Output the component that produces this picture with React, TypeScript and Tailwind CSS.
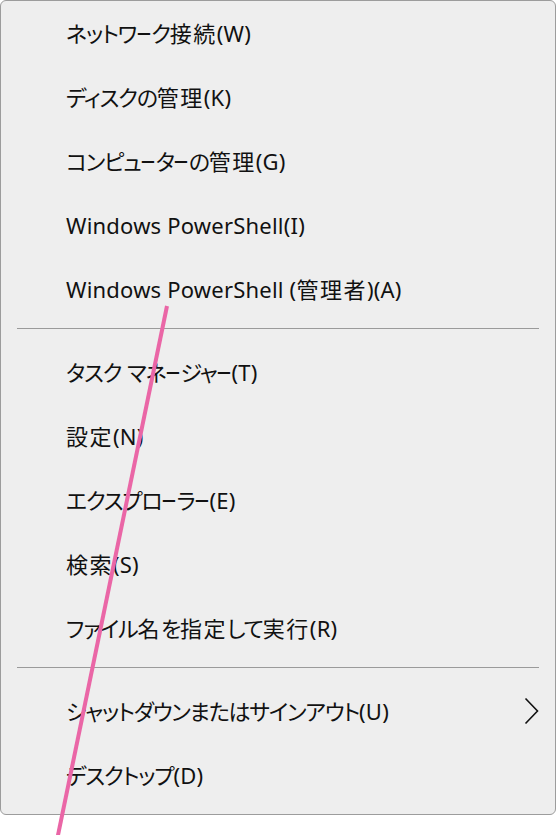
import React from 'react';

const groups: string[][] = [
  [
    'ネットワーク接続(W)',
    'ディスクの管理(K)',
    'コンピューターの管理(G)',
    'Windows PowerShell(I)',
    'Windows PowerShell (管理者)(A)',
  ],
  [
    'タスク マネージャー(T)',
    '設定(N)',
    'エクスプローラー(E)',
    '検索(S)',
    'ファイル名を指定して実行(R)',
  ],
  ['シャットダウンまたはサインアウト(U)', 'デスクトップ(D)'],
];

// the fallback CJK font is wider in kana and narrower in kanji than the
// original UI font, so each script run gets its own spacing
const runClass = (ch: string) => {
  if (ch === 'ー') return 'bar';
  if (/[\u3040-\u30ff]/.test(ch)) return 'tracking-[-1.2px]';
  if (/[\u4e00-\u9fff]/.test(ch)) return 'tracking-[1.5px]';
  return 'tracking-[0.2px]';
};

const Label = ({ text }: { text: string }) => {
  const runs: { cls: string; text: string }[] = [];
  for (const ch of text) {
    const cls = runClass(ch);
    const last = runs[runs.length - 1];
    if (last && last.cls === cls && cls !== 'bar') last.text += ch;
    else runs.push({ cls, text: ch });
  }
  return (
    <span>
      {runs.map((r, i) =>
        r.cls === 'bar' ? (
          <span key={i} className="inline-flex justify-center w-[15px]">
            <span className="inline-block scale-x-[0.7]">{r.text}</span>
          </span>
        ) : (
          <span key={i} className={r.cls}>{r.text}</span>
        )
      )}
    </span>
  );
};

const App = () => {
  return (
    <div className="relative w-[556px] h-[835px] bg-white overflow-hidden font-['Noto_Sans','Noto_Sans_CJK_JP',sans-serif]">
      <div className="w-[556px] h-[815px] bg-[#eeeeee] border border-[#9c9c9c] rounded-[6px]">
        {groups.map((items, gi) => (
          <div key={gi}>
            {gi > 0 && <div className="mx-4 mt-[7px] mb-[11px] h-px bg-[#9a9a9a]" />}
            {items.map((label) => (
              <div key={label} className="h-16 flex items-center justify-between pl-[65px] pr-4 text-[22px] text-[#111] [font-feature-settings:'palt']">
                <Label text={label} />
                {label.startsWith('シャット') && (
                  <svg width="15" height="28" viewBox="0 0 15 28" className="shrink-0">
                    <polyline points="1.5,1.5 13.5,14 1.5,26.5" fill="none" stroke="#111" strokeWidth="1.6" />
                  </svg>
                )}
              </div>
            ))}
          </div>
        ))}
      </div>

      {/* annotation stroke */}
      <svg className="absolute inset-0 pointer-events-none" width="556" height="835">
        <line x1="167" y1="306" x2="57" y2="840" stroke="#ea66a6" strokeWidth="4" />
      </svg>
    </div>
  );
};

export default App;
